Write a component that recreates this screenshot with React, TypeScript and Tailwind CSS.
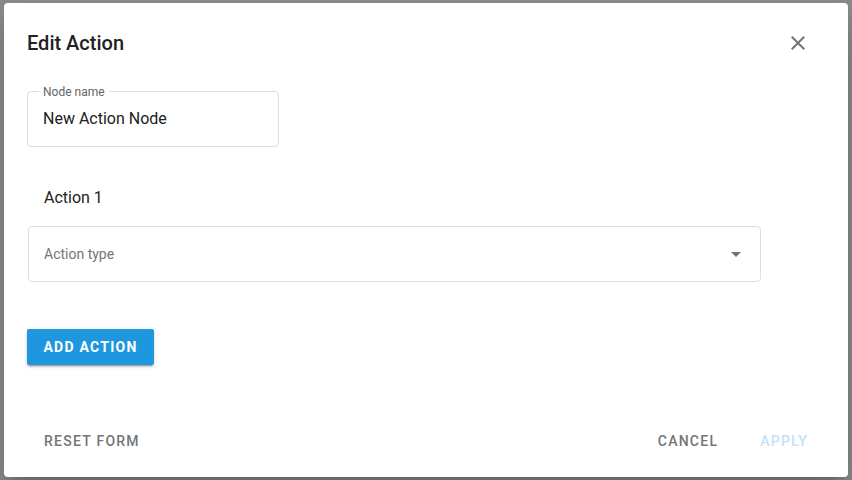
import React from 'react';

const font = { fontFamily: 'Roboto, "Liberation Sans", sans-serif' };

export default function App() {
  return (
    <div className="flex h-[480px] w-[852px] bg-[#8a8a8a] pl-[4px] pt-[3px]" style={font}>
      {/* 对话框 */}
      <div className="flex h-[474px] w-[844px] flex-col rounded-[4px] bg-white shadow-[0_11px_15px_-7px_rgba(0,0,0,0.2),0_24px_38px_3px_rgba(0,0,0,0.14)]">
        <div className="flex items-center justify-between pl-[23px] pr-[38px] pt-[28px]">
          <h2 className="text-[20px] font-medium leading-6 text-[#212121]">Edit Action</h2>
          <svg viewBox="0 0 24 24" className="h-6 w-6 fill-[#757575]">
            <path d="M19 6.41 17.59 5 12 10.59 6.41 5 5 6.41 10.59 12 5 17.59 6.41 19 12 13.41 17.59 19 19 17.59 13.41 12z" />
          </svg>
        </div>

        <div className="flex flex-col pl-[23px] pt-[36px]">
          {/* 节点名称 */}
          <div className="relative flex h-[56px] w-[252px] items-center rounded-[4px] border border-[#dedede] px-[15px]">
            <span className="absolute left-[11px] top-[-8px] bg-white px-[4px] text-[12px] leading-4 text-[#666]">
              Node name
            </span>
            <span className="text-[16px] leading-6 text-[#212121]">New Action Node</span>
          </div>

          <div className="pl-[17px] pt-[39px] text-[16px] leading-6 text-[#212121]">Action 1</div>

          <div className="ml-[1px] mt-[16px] flex h-[56px] w-[733px] items-center justify-between rounded-[4px] border border-[#dedede] pl-[15px] pr-[12px]">
            <span className="text-[14px] text-[#757575]">Action type</span>
            <svg viewBox="0 0 24 24" className="h-6 w-6 fill-[#757575]">
              <path d="M7 10l5 5 5-5z" />
            </svg>
          </div>

          <div className="pt-[47px]">
            <button className="h-[36px] w-[127px] rounded-[2px] bg-[#1f97df] text-[14px] font-bold uppercase tracking-[1.25px] text-white shadow-[0_3px_1px_-2px_rgba(0,0,0,0.2),0_2px_2px_0_rgba(0,0,0,0.14),0_1px_5px_0_rgba(0,0,0,0.12)]">
              Add Action
            </button>
          </div>
        </div>

        <div className="mt-auto flex items-center justify-between pb-[18px] pl-[24px] pr-[24px]">
          <button className="h-[36px] px-[16px] text-[14px] font-medium uppercase tracking-[1.25px] text-[#757575]">
            Reset Form
          </button>
          <div className="flex items-center gap-[10px]">
            <button className="h-[36px] px-[16px] text-[14px] font-medium uppercase tracking-[1.25px] text-[#757575]">
              Cancel
            </button>
            <button className="h-[36px] px-[16px] text-[14px] font-medium uppercase tracking-[1.25px] text-[#c2e2f8]">
              Apply
            </button>
          </div>
        </div>
      </div>
    </div>
  );
}
